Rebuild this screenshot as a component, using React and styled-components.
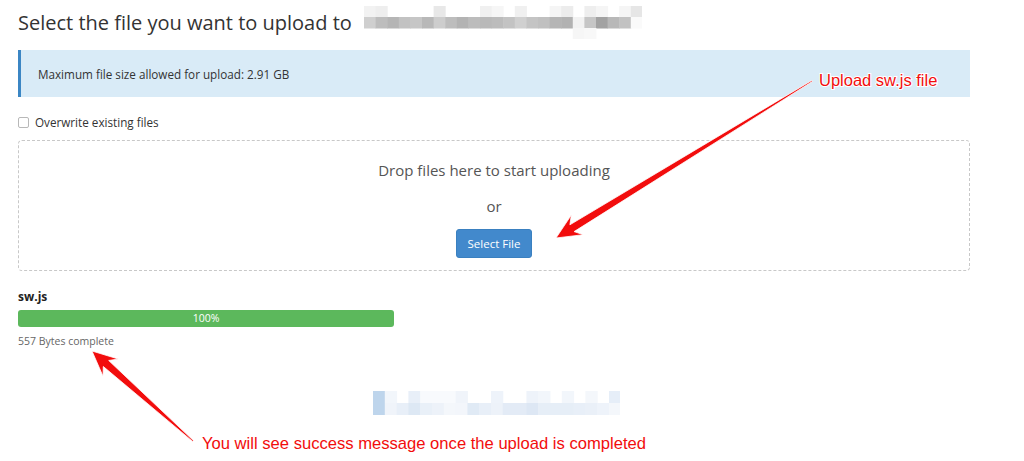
import React from "react";
import styled, { createGlobalStyle } from "styled-components";

const Global = createGlobalStyle`
  html, body { margin: 0; padding: 0; background: #fff; }
  body { font-family: "Open Sans", "Liberation Sans", sans-serif; color: #333; }
  * { box-sizing: border-box; }
`;

const Page = styled.div`
  position: relative;
  width: 1024px;
  height: 461px;
  overflow: hidden;
  padding: 0 54px 0 18px;
`;

const TitleRow = styled.div`
  display: flex;
  align-items: center;
  height: 42px;
  padding-top: 2px;
`;

const Title = styled.h1`
  margin: 0;
  font-size: 20px;
  font-weight: 400;
  color: #333;
  letter-spacing: 0;
  white-space: nowrap;
`;

const Mosaic = styled.svg`
  display: block;
  flex: none;
  margin-left: ${(p) => p.$ml || 0}px;
`;

const InfoBox = styled.div`
  margin-top: 8px;
  height: 47px;
  display: flex;
  align-items: center;
  padding-left: 17px;
  background: #d9ebf7;
  border-left: 3px solid #3b86c4;
  font-size: 11.7px;
  color: #333;
`;

const CheckRow = styled.label`
  display: flex;
  align-items: center;
  gap: 6px;
  margin-top: 18px;
  height: 14px;
  font-size: 11.7px;
  color: #333;
`;

const Box = styled.span`
  width: 11px;
  height: 11px;
  border: 1px solid #b8b8b8;
  border-radius: 2px;
  background: #fff;
`;

const DropZone = styled.div`
  margin-top: 11px;
  height: 131px;
  border: 1px dashed #c8c8c8;
  border-radius: 4px;
  display: flex;
  flex-direction: column;
  align-items: center;
  padding-top: 19px;
`;

const DropLine = styled.div`
  font-size: 15px;
  line-height: 20px;
  color: #555;
  margin-top: ${(p) => p.$mt || 0}px;
`;

const Button = styled.button`
  margin-top: 13px;
  width: 76px;
  height: 29px;
  border: 1px solid #3a80c0;
  border-radius: 3px;
  background: #4289cc;
  color: #fff;
  font-family: "Open Sans", "Liberation Sans", sans-serif;
  font-size: 11.5px;
  padding: 0;
`;

const FileName = styled.div`
  margin-top: 19px;
  font-size: 12px;
  font-weight: 700;
  line-height: 14px;
  color: #222;
`;

const Bar = styled.div`
  margin-top: 6px;
  width: 376px;
  height: 17px;
  border-radius: 3px;
  background: #f5f5f5;
  overflow: hidden;
`;

const Fill = styled.div`
  height: 100%;
  background: #5cb85c;
  color: #fff;
  font-size: 10.5px;
  line-height: 17px;
  text-align: center;
`;

const Complete = styled.div`
  margin-top: 8px;
  font-size: 10.5px;
  color: #666;
  line-height: 12px;
`;

const Footer = styled.div`
  margin-top: 44px;
  display: flex;
  justify-content: center;
  padding-left: 5px;
`;

const Overlay = styled.svg`
  position: absolute;
  left: 0;
  top: 0;
  pointer-events: none;
`;

const Note = styled.text`
  font-family: "Liberation Sans", Arial, sans-serif;
  fill: #f20d0d;
  stroke: #fff;
  stroke-width: 2px;
  paint-order: stroke;
`;

const titleCells = [
  [0, 0, "#f2f2f2"], [1, 0, "#eeeeee"], [6, 0, "#e8e8e8"], [10, 0, "#f0f0f0"], [11, 0, "#f6f6f6"], [13, 0, "#f0f0f0"], [16, 0, "#f5f5f5"], [17, 0, "#ececec"], [19, 0, "#eeeeee"], [20, 0, "#f5f5f5"], [22, 0, "#f5f5f5"], [23, 0, "#e6e6e6"],
  [0, 1, "#cfcfcf"], [1, 1, "#bdbdbd"], [2, 1, "#b5b5b5"], [3, 1, "#c2c2c2"], [4, 1, "#c6c6c6"], [5, 1, "#b8b8b8"], [6, 1, "#cdcdcd"], [7, 1, "#bdbdbd"], [8, 1, "#b3b3b3"], [9, 1, "#bcbcbc"], [10, 1, "#b9b9b9"], [11, 1, "#bcbcbc"], [12, 1, "#c3c3c3"], [13, 1, "#d0d0d0"], [14, 1, "#c4c4c4"], [15, 1, "#c0c0c0"], [16, 1, "#b5b5b5"], [17, 1, "#b2b2b2"], [18, 1, "#f2f2f2"], [19, 1, "#c6c6c6"], [20, 1, "#a2a2a2"], [21, 1, "#b8b8b8"], [22, 1, "#c2c2c2"], [23, 1, "#fafafa"],
  [18, 2, "#f6f6f6"], [19, 2, "#f8f8f8"],
];

const footCells = [
  [0, 0, "#bed5ec"], [1, 0, "#f2f6fb"], [3, 0, "#e8eff8"], [4, 0, "#f8fafd"], [5, 0, "#f8fafd"], [6, 0, "#f8fafd"], [7, 0, "#f0f4fa"], [10, 0, "#eef3fa"], [13, 0, "#eef3fa"], [14, 0, "#f2f6fb"], [16, 0, "#f2f6fb"], [18, 0, "#f4f7fb"], [20, 0, "#e6eef8"],
  [0, 1, "#bed5ec"], [1, 1, "#f0f4fa"], [2, 1, "#e8eff8"], [3, 1, "#dde8f4"], [4, 1, "#e9f0f8"], [5, 1, "#edf2f9"], [6, 1, "#f4f7fb"], [7, 1, "#f3f6fb"], [8, 1, "#e0eaf5"], [9, 1, "#e8eff8"], [10, 1, "#edf2f9"], [11, 1, "#e3ebf6"], [12, 1, "#e3ebf6"], [13, 1, "#dde7f4"], [14, 1, "#e6eef7"], [15, 1, "#e6eef7"], [16, 1, "#e6eef7"], [17, 1, "#e8eff8"], [18, 1, "#eaf0f8"], [19, 1, "#eef3fa"], [20, 1, "#f4f7fb"],
];

function MosaicBlock({ cells, cw, ch, cols, rows, ml }) {
  return (
    <Mosaic $ml={ml} width={cols * cw} height={rows * ch} viewBox={`0 0 ${cols * cw} ${rows * ch}`}>
      {cells.map(([x, y, c], i) => (
        <rect key={i} x={x * cw} y={y * ch} width={cw + 0.5} height={ch + 0.5} fill={c} />
      ))}
    </Mosaic>
  );
}

function arrowPoints(tx, ty, hx, hy, shaft, head, headLen) {
  const dx = hx - tx, dy = hy - ty;
  const len = Math.hypot(dx, dy);
  const ux = dx / len, uy = dy / len;
  const nx = -uy, ny = ux;
  const bx = hx - ux * headLen, by = hy - uy * headLen;
  const nbx = hx - ux * headLen * 0.75, nby = hy - uy * headLen * 0.75;
  const p = [
    [tx + nx * 0.6, ty + ny * 0.6],
    [nbx + nx * shaft / 2, nby + ny * shaft / 2],
    [bx + nx * head / 2, by + ny * head / 2],
    [hx, hy],
    [bx - nx * head / 2, by - ny * head / 2],
    [nbx - nx * shaft / 2, nby - ny * shaft / 2],
    [tx - nx * 0.6, ty - ny * 0.6],
  ];
  return p.map(([x, y]) => `${x.toFixed(1)},${y.toFixed(1)}`).join(" ");
}

export default function App() {
  return (
    <>
      <Global />
      <Page>
        <TitleRow>
          <Title>Select the file you want to upload to</Title>
          <MosaicBlock cells={titleCells} cw={11.6} ch={11} cols={24} rows={3} ml={12} />
        </TitleRow>
        <InfoBox>Maximum file size allowed for upload: 2.91 GB</InfoBox>
        <CheckRow>
          <Box />
          Overwrite existing files
        </CheckRow>
        <DropZone>
          <DropLine>Drop files here to start uploading</DropLine>
          <DropLine $mt={16}>or</DropLine>
          <Button>Select File</Button>
        </DropZone>
        <FileName>sw.js</FileName>
        <Bar>
          <Fill style={{ width: "100%" }}>100%</Fill>
        </Bar>
        <Complete>557 Bytes complete</Complete>
        <Footer>
          <MosaicBlock cells={footCells} cw={11.8} ch={12} cols={21} rows={2} />
        </Footer>
        <Overlay width="1024" height="461" viewBox="0 0 1024 461">
          <polygon points={arrowPoints(812, 81, 556, 238, 8, 23, 25)} fill="#f20d0d" stroke="#fff" strokeWidth="0.8" />
          <polygon points={arrowPoints(193, 441, 92, 351, 8, 23, 25)} fill="#f20d0d" stroke="#fff" strokeWidth="0.8" />
          <Note x="819" y="86" fontSize="16.5">Upload sw.js file</Note>
          <Note x="202" y="449" fontSize="16.6">You will see success message once the upload is completed</Note>
        </Overlay>
      </Page>
    </>
  );
}
